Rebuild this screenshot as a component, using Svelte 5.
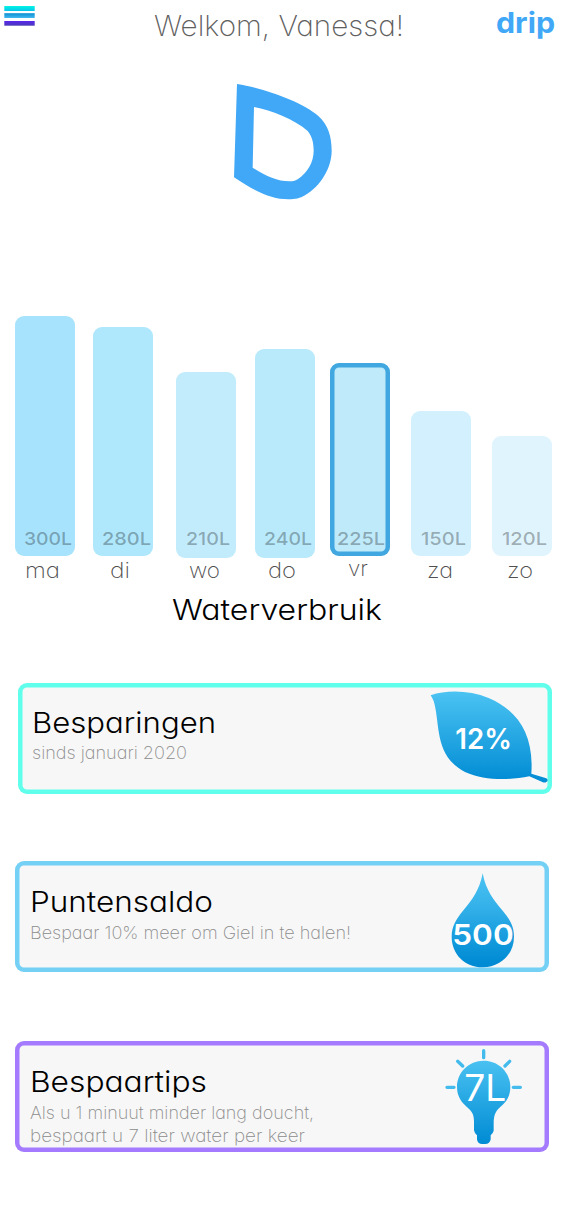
<script>
  const days = [
    { day: 'ma', value: '300L', gap: 15, height: 240, color: '#a8e3fd', vx: 9, vw: 48, dx: 10, dw: 35 },
    { day: 'di', value: '280L', gap: 18, height: 229.5, color: '#afe7fc', vx: 9, vw: 49, dx: 17, dw: 20 },
    { day: 'wo', value: '210L', gap: 22.5, height: 186, drop: 1.5, color: '#c2ecfc', vx: 10, vw: 44, dx: 13, dw: 31 },
    { day: 'do', value: '240L', gap: 19.5, height: 208.5, drop: 1.5, color: '#b9eafb', vx: 9, vw: 48, dx: 13, dw: 28 },
    { day: 'vr', value: '225L', gap: 15, height: 193.5, color: '#bfeafa', vx: 7, vw: 48, dx: 18, dw: 20, lift: 1.7, active: true },
    { day: 'za', value: '150L', gap: 21, height: 145.5, color: '#d2f0fd', vx: 9.5, vw: 45, dx: 15.5, dw: 26 },
    { day: 'zo', value: '120L', gap: 21, height: 120, color: '#dff4fd', vx: 9.5, vw: 45, dx: 15, dw: 26 },
  ];
</script>

{#snippet line(text, width, height, baseline, kind)}
  <svg class="line {kind}" {width} {height}>
    <text x="0" y={baseline} textLength={width} lengthAdjust="spacingAndGlyphs">{text}</text>
  </svg>
{/snippet}

<main>
  <header>
    <svg class="menu" width="31" height="20" viewBox="0 0 31 20">
      <defs>
        <linearGradient id="m1" x2="0" y2="1"><stop stop-color="#00f5e0" /><stop offset="1" stop-color="#05c5f0" /></linearGradient>
        <linearGradient id="m2" x2="0" y2="1"><stop stop-color="#0b8fd2" /><stop offset="1" stop-color="#43b8ee" /></linearGradient>
        <linearGradient id="m3" x2="0" y2="1"><stop stop-color="#5a25ec" /><stop offset="1" stop-color="#4a3cb8" /></linearGradient>
      </defs>
      <rect x=".3" y="0" width="30.4" height="5" fill="url(#m1)" />
      <rect x=".3" y="7.2" width="30.4" height="4.8" fill="url(#m2)" />
      <rect x=".3" y="15" width="30.4" height="4.7" fill="url(#m3)" />
    </svg>
    <div class="welcome">{@render line('Welkom, Vanessa!', 250, 42, 36.3, 'greeting')}</div>
    <div class="brand">{@render line('drip', 59, 44, 33, 'drip')}</div>
  </header>

  <svg class="logo" width="130" height="140" viewBox="0 0 390 420">
    <path fill="#40a8f6" fill-rule="evenodd" d="M51 42C132 55 246 95 295 138C325 164 335 202 335 242C335 294 302 348 255 376C240 385 226 388 205 388C155 388 105 365 42 322ZM102 111C155 121 225 149 263 183C277 200 281 220 281 243C281 276 262 309 233 328C225 333 218 334 208 334C172 334 136 317 98 293Z" />
  </svg>

  <section class="chart">
    {#each days as d}
      <div class="column" style:margin-left="{d.gap}px">
        <div class="bar" class:active={d.active} style:height="{d.height}px" style:background={d.color} style:margin-bottom="{-(d.drop ?? 0)}px">
          <div class="value" style:padding-left="{d.vx}px" style:padding-bottom="{d.drop ?? 0}px">{@render line(d.value, d.vw, 18, 6.5, 'amount')}</div>
        </div>
        <div class="day" style:padding-left="{d.dx}px">{@render line(d.day, d.dw, 28, 22 - (d.lift ?? 0), 'name')}</div>
      </div>
    {/each}
  </section>
  <h2>{@render line('Waterverbruik', 210, 40, 35.5, 'title')}</h2>

  <section class="cards">
    <article class="savings">
      <div class="copy">
        {@render line('Besparingen', 184, 56, 50, 'title')}
        {@render line('sinds januari 2020', 155, 23, 20.3, 'note')}
      </div>
      <svg class="icon" width="153" height="140" viewBox="0 0 459 420">
        <defs><linearGradient id="leaf" x2="0" y2="1"><stop stop-color="#4bc3f2" /><stop offset="1" stop-color="#008bd4" /></linearGradient></defs>
        <path fill="url(#leaf)" d="M62 76C112 59 178 61 236 84C324 122 372 194 364 311L409 325Q417 331 409 336Q404 339 397 336L358 319C294 331 224 332 165 306C71 256 92 164 71 93Q67 84 62 76Z" />
        <text x="136" y="236" textLength="170" lengthAdjust="spacingAndGlyphs" class="figure">12%</text>
      </svg>
    </article>

    <article class="points">
      <div class="copy">
        {@render line('Puntensaldo', 183, 56, 51, 'title')}
        {@render line('Bespaar 10% meer om Giel in te halen!', 321, 23, 22, 'note')}
      </div>
      <svg class="icon" width="153" height="135" viewBox="0 0 459 405">
        <defs><linearGradient id="drop" x2="0" y2="1"><stop stop-color="#4bc3f2" /><stop offset=".3" stop-color="#38b4eb" /><stop offset=".95" stop-color="#008bd4" /></linearGradient></defs>
        <path fill="url(#drop)" d="M218 70C228 122 251 150 278 182C301 210 312 229 312 260C312 312 272 352 218 352C164 352 125 312 125 260C125 229 137 210 159 182C186 150 208 122 218 70Z" />
        <text x="127" y="284" textLength="184" lengthAdjust="spacingAndGlyphs" class="figure">500</text>
      </svg>
    </article>

    <article class="tips">
      <div class="copy">
        {@render line('Bespaartips', 177, 56, 51, 'title')}
        {@render line('Als u 1 minuut minder lang doucht,', 284, 23, 22, 'note')}
        {@render line('bespaart u 7 liter water per keer', 275, 23, 22, 'note')}
      </div>
      <svg class="icon" width="153" height="135" viewBox="0 0 459 405">
        <defs><linearGradient id="bulb" x2="0" y2="1"><stop stop-color="#49c1f1" /><stop offset="1" stop-color="#008bd4" /></linearGradient></defs>
        <path fill="url(#bulb)" d="M221 92C266 92 301 127 301 171C301 201 286 219 270 232C254 246 251 260 251 282V302Q249 310 242 316V328Q240 342 225 342H217Q202 342 201 328V316Q193 309 192 301V276C192 256 188 246 174 234C157 219 141 202 141 171C141 127 176 92 221 92Z" />
        <path fill="none" stroke="#43bbed" stroke-width="10" stroke-linecap="round" d="M221 62V83M143 94L158 108M299 94L285 108M111 172H132M310 172H331" />
        <text x="163" y="212" textLength="126" lengthAdjust="spacingAndGlyphs" class="figure thin">7L</text>
      </svg>
    </article>
  </section>
</main>

<style>
  :global(body) { background: #fff; }
  main { width: 563px; height: 1218px; overflow: hidden; font-family: Inter, sans-serif; font-feature-settings: 'cv11' 1; display: flex; flex-direction: column; }
  svg { display: block; flex: none; }
  .line { overflow: visible; }
  header { display: flex; height: 70px; flex: none; }
  .menu { margin: 6px 0 0 4px; }
  .welcome { margin-left: 119px; }
  .brand { margin-left: 92px; }
  .greeting { font-size: 29px; font-weight: 200; fill: #606060; }
  .drip { font-size: 29px; font-weight: 700; fill: #40a8f6; }
  .logo { margin-left: 220px; }
  .chart { display: flex; align-items: flex-end; height: 374px; flex: none; }
  .column { flex: none; width: 60px; display: flex; flex-direction: column; }
  .bar { border-radius: 9px; display: flex; align-items: flex-end; box-sizing: border-box; }
  .bar.active { box-shadow: inset 0 0 0 4.5px #40a7e0; }
  .amount { font-size: 17.5px; font-weight: 500; fill: #000; fill-opacity: .3; }
  .name { font-size: 21.5px; font-weight: 200; fill: #505050; }
  h2 { margin: 0 0 0 172px; height: 98.7px; flex: none; }
  .title { font-size: 29px; font-weight: 300; fill: #000; }
  .note { font-size: 17.5px; font-weight: 200; fill: #8c8c8c; }
  .cards { display: flex; flex-direction: column; gap: 69px; padding-left: 15px; }
  article { width: 534px; height: 111px; box-sizing: border-box; border-radius: 9px; display: flex; justify-content: space-between; align-items: flex-start; background: #f7f7f7; }
  .savings { margin: 0 0 -1.7px 3px; box-shadow: inset 0 0 0 4.5px #60ffec; }
  .points { box-shadow: inset 0 0 0 4.5px #74d0f5; }
  .tips { box-shadow: inset 0 0 0 4.5px #a47bff; }
  .copy { padding-left: 14.5px; }
  .savings .copy { padding-left: 14px; }
  .icon { margin: -11px -14px -20px 0; overflow: visible; }
  .savings .icon { margin: -12.5px -11px -20px 0; }
  .figure { font-size: 86px; font-weight: 600; fill: #fff; }
  .thin { font-size: 112px; font-weight: 400; }
</style>
